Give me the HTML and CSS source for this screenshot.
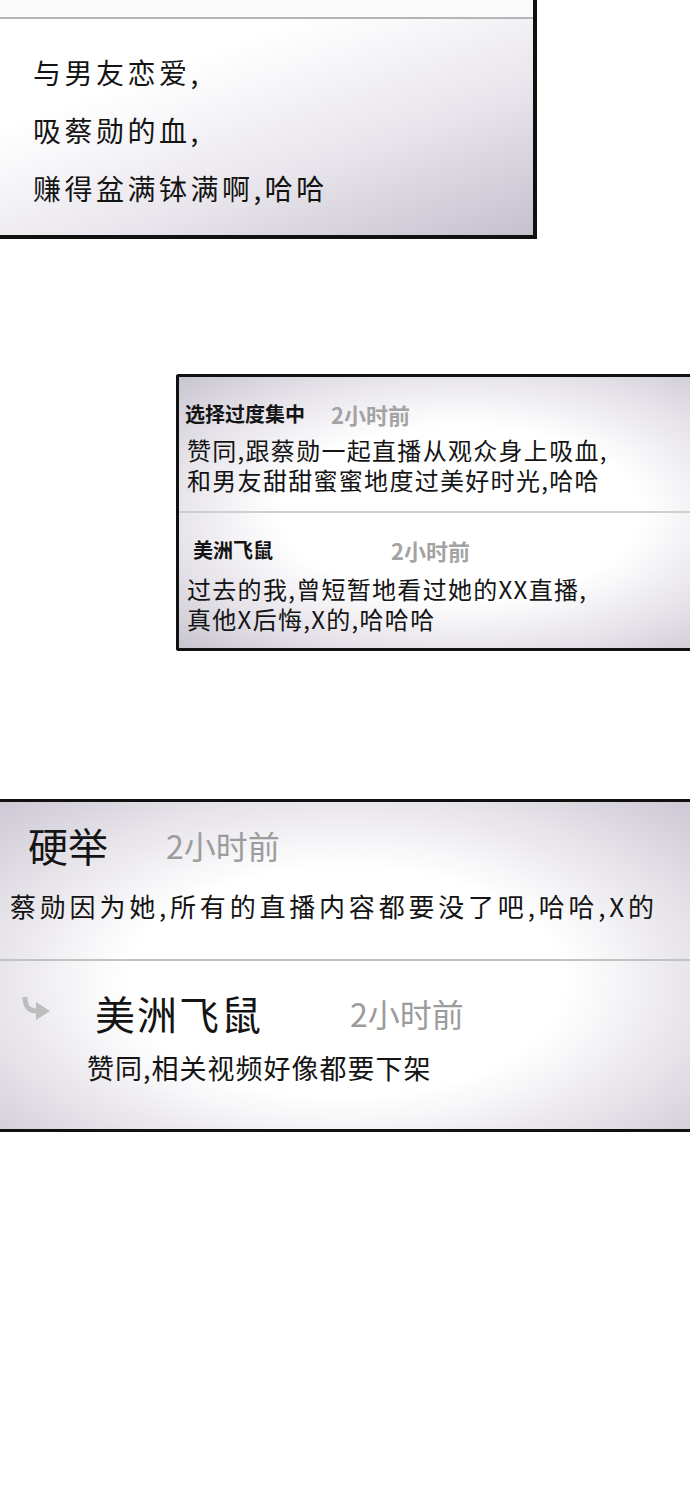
FILE: index.html
```html
<!DOCTYPE html>
<html lang="zh-CN">
<head>
    <meta charset="UTF-8">
    <meta name="viewport" content="width=device-width, initial-scale=1.0">
    <title>评论</title>
    <link rel="stylesheet" href="styles.css">
</head>
<body>
    <!-- panel 1: the tail of a post, cut off at the top -->
    <div class="panel panel-post">
        <div class="post-strip"></div>
        <div class="post-body">
            <p>与男友恋爱,</p>
            <p>吸蔡勋的血,</p>
            <p>赚得盆满钵满啊,哈哈</p>
        </div>
    </div>

    <!-- panel 2: small comment list -->
    <div class="panel panel-small">
        <div class="small-item">
            <div class="small-head">
                <span class="small-name">选择过度集中</span>
                <span class="small-time time-near">2小时前</span>
            </div>
            <p>赞同,跟蔡勋一起直播从观众身上吸血,</p>
            <p>和男友甜甜蜜蜜地度过美好时光,哈哈</p>
        </div>
        <div class="small-item">
            <div class="small-head">
                <span class="small-name name-indent">美洲飞鼠</span>
                <span class="small-time time-far">2小时前</span>
            </div>
            <p>过去的我,曾短暂地看过她的XX直播,</p>
            <p>真他X后悔,X的,哈哈哈</p>
        </div>
    </div>

    <!-- panel 3: big comment with reply -->
    <div class="panel panel-big">
        <div class="big-comment">
            <div class="big-head">
                <span class="big-name">硬举</span>
                <span class="big-time">2小时前</span>
            </div>
            <p class="big-text">蔡勋因为她,所有的直播内容都要没了吧,哈哈,X的</p>
        </div>
        <div class="big-reply">
            <div class="big-head reply-head">
                <svg class="reply-icon" width="30" height="26" viewBox="0 0 30 26">
                    <path d="M4 1 C4 11 8 15 16 15" fill="none" stroke="#bdbdbd" stroke-width="5"/>
                    <polygon points="15,6 29,15 15,24" fill="#bdbdbd"/>
                </svg>
                <span class="big-name reply-name">美洲飞鼠</span>
                <span class="big-time">2小时前</span>
            </div>
            <p class="reply-text">赞同,相关视频好像都要下架</p>
        </div>
    </div>
</body>
</html>
```

FILE: styles.css
```css
body {
    margin: 0;
    padding: 0;
    background: #fff;
    color: #141414;
    font-family: "Noto Sans CJK SC", "Noto Sans", sans-serif;
    overflow: hidden;
}
p {
    margin: 0;
}
.panel {
    box-sizing: border-box;
}

/* panel 1 */
.panel-post {
    width: 537px;
    border-right: 4px solid #111;
    border-bottom: 4px solid #111;
    background: linear-gradient(160deg, #fff 30%, #e8e5ec 65%, #c6c0cd 100%);
}
.post-strip {
    height: 17px;
    background: #fbfbfb;
    border-bottom: 2px solid #b5b5b5;
}
.post-body {
    padding: 24px 0 18px 33px;
    font-size: 28px;
    line-height: 58px;
    letter-spacing: 3.5px;
}

/* panel 2 */
.panel-small {
    margin: 135px 0 0 176px;
    border: 3px solid #111;
    border-right: none;
    border-radius: 3px 0 0 3px;
    background: radial-gradient(ellipse at 55% 50%, #fff 45%, #e4e1e8 75%, #c9c5d0 100%);
}
.small-item {
    padding: 23px 0 16px 8px;
    font-size: 24px;
    line-height: 30px;
    letter-spacing: 1.3px;
}
.small-item + .small-item {
    border-top: 2px solid #cfcfcf;
    padding-top: 23px;
    padding-bottom: 14px;
}
.small-head {
    display: flex;
    align-items: center;
    height: 28px;
    margin-bottom: 7px;
    letter-spacing: 0;
}
.small-item + .small-item .small-head {
    margin-bottom: 10px;
}
.small-name {
    font-size: 20px;
    font-weight: bold;
    margin-left: -2px;
}
.name-indent {
    margin-left: 6px;
}
.small-time {
    font-size: 22px;
    font-weight: bold;
    color: #a3a3a3;
}
.time-near {
    margin-left: 26px;
}
.time-far {
    margin-left: 118px;
}

/* panel 3 */
.panel-big {
    margin-top: 148px;
    border-top: 3px solid #111;
    border-bottom: 3px solid #111;
    box-shadow: 0 2px 0 #888;
    background: radial-gradient(ellipse at 50% 55%, #fff 45%, #e7e4ea 72%, #cdc8d4 100%);
}
.big-comment {
    padding: 18px 0 33px 10px;
    border-bottom: 2px solid #c2c2c2;
}
.big-head {
    display: flex;
    align-items: center;
    height: 50px;
}
.big-name {
    font-size: 40px;
    line-height: 50px;
    margin-left: 18px;
}
.big-time {
    font-size: 32px;
    line-height: 50px;
    color: #9c9c9c;
    margin-left: 58px;
}
.big-text {
    margin-top: 16px;
    font-size: 26px;
    line-height: 40px;
    letter-spacing: 3.8px;
}
.big-reply {
    padding: 27px 0 43px 0;
}
.reply-head {
    padding-left: 21px;
}
.reply-icon {
    flex: none;
    align-self: flex-start;
    margin-top: 8px;
}
.reply-name {
    margin-left: 44px;
    letter-spacing: 2px;
}
.reply-head .big-time {
    margin-left: 87px;
}
.reply-text {
    margin: 12px 0 0 87px;
    font-size: 27px;
    line-height: 36px;
    letter-spacing: 1px;
}
```
